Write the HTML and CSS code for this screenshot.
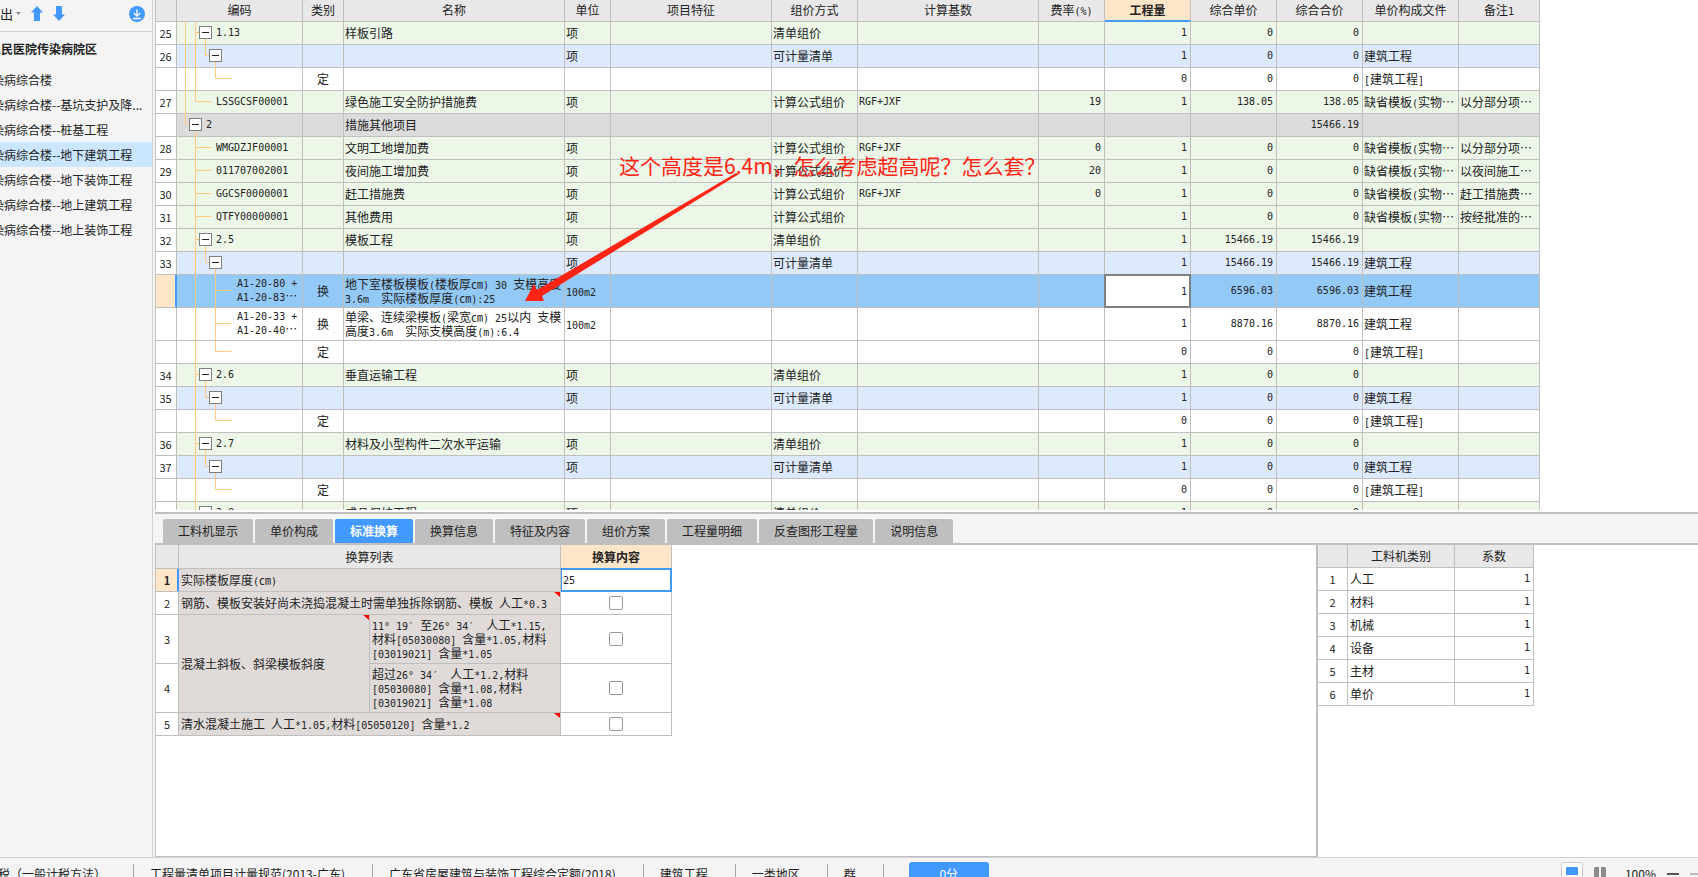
FILE: index.html
```html
<!DOCTYPE html>
<html lang="zh-CN">
<head>
<meta charset="utf-8">
<title>地下建筑工程 - 措施项目</title>
<link rel="stylesheet" href="styles.css">
</head>
<body>
<!-- Tree connector shapes, one group per kind of row -->
<svg class="defs" aria-hidden="true">
  <defs>
    <g id="box"><rect x="0.5" y="0.5" width="12" height="12" fill="#fff" stroke="#808080"/><path d="M3 6.5h7" stroke="#222"/></g>
    <g id="t-group-a"><path d="M8.5 0v23M18.5 0v23M18 10.5h4M28.5 17v6"/><use href="#box" x="22" y="4"/></g>
    <g id="t-sub-a"><path d="M8.5 0v23M18.5 0v23M28.5 0v10.5h4M38.5 17v6"/><use href="#box" x="32" y="4"/></g>
    <g id="t-end-a"><path d="M8.5 0v23M18.5 0v23M38.5 0v10.5h16"/></g>
    <g id="t-last-a"><path d="M8.5 0v23M18.5 0v10.5h16"/></g>
    <g id="t-root"><path d="M8.5 0v10.5h4M18.5 17v6"/><use href="#box" x="12" y="4"/></g>
    <g id="t-leaf"><path d="M18.5 0v23M18 10.5h16"/></g>
    <g id="t-group"><path d="M18.5 0v23M18 10.5h4M28.5 17v6"/><use href="#box" x="22" y="4"/></g>
    <g id="t-sub"><path d="M18.5 0v23M28.5 0v10.5h4M38.5 17v6"/><use href="#box" x="32" y="4"/></g>
    <g id="t-item"><path d="M18.5 0v33M38.5 0v33M38 15.5h16"/></g>
    <g id="t-end"><path d="M18.5 0v23M38.5 0v10.5h16"/></g>
  </defs>
</svg>

<div class="app">
  <div class="workspace">
    <aside class="sidebar">
      <div class="toolbar">
        <button class="export" type="button">导出<svg width="5" height="3"><path d="M0 0h5L2.500 3z" fill="#8c8c8c"/></svg></button>
        <button class="tool" type="button" aria-label="上移"><svg width="12" height="15"><path d="M6 0l6 6.500H9V15H3V6.500H0z" fill="#4299ff"/></svg></button>
        <button class="tool" type="button" aria-label="下移"><svg width="12" height="15"><path d="M6 15l6-6.500H9V0H3v8.500H0z" fill="#4299ff"/></svg></button>
        <button class="tool download" type="button" aria-label="下载"><svg width="16" height="16"><circle cx="8" cy="8" r="8" fill="#4299ff"/><path d="M8 3.500v6M4.800 7L8 10.200 11.200 7M4 12.500h8" fill="none" stroke="#fff" stroke-width="1.300"/></svg></button>
      </div>
      <h1 class="project">人民医院传染病院区</h1>
      <nav class="units">
        <a href="#u1">染病综合楼</a>
        <a href="#u2">染病综合楼--基坑支护及降...</a>
        <a href="#u3">染病综合楼--桩基工程</a>
        <a href="#u4" class="current">染病综合楼--地下建筑工程</a>
        <a href="#u5">染病综合楼--地下装饰工程</a>
        <a href="#u6">染病综合楼--地上建筑工程</a>
        <a href="#u7">染病综合楼--地上装饰工程</a>
      </nav>
    </aside>

    <main class="main">
      <section class="upper">
        <div class="grid-view">
          <table class="sheet bill">
            <colgroup><col class="c-no"><col class="c-code"><col class="c-kind"><col class="c-name"><col class="c-unit"><col class="c-feature"><col class="c-mode"><col class="c-base"><col class="c-rate"><col class="c-num"><col class="c-num"><col class="c-num"><col class="c-file"><col class="c-note"></colgroup>
            <thead>
              <tr><th><th>编码<th>类别<th>名称<th>单位<th>项目特征<th>组价方式<th>计算基数<th>费率<span class="m">(%)</span><th class="picked">工程量<th>综合单价<th>综合合价<th>单价构成文件<th>备注<span class="m">1</span></tr>
            </thead>
            <tbody>
              <tr class="green"><td>25<td><div class="tree"><svg class="l3"><use href="#t-group-a"/></svg>1.13</div><td><td>样板引路<td>项<td><td>清单组价<td><td><td>1<td>0<td>0<td><td></tr>
              <tr class="blue"><td>26<td><div class="tree"><svg class="l3"><use href="#t-sub-a"/></svg></div><td><td><td>项<td><td>可计量清单<td><td><td>1<td>0<td>0<td>建筑工程<td></tr>
              <tr><td><td><div class="tree"><svg class="l3"><use href="#t-end-a"/></svg></div><td>定<td><td><td><td><td><td><td>0<td>0<td>0<td><span class="m">[</span>建筑工程<span class="m">]</span><td></tr>
              <tr class="green"><td>27<td><div class="tree"><svg class="l3"><use href="#t-last-a"/></svg>LSSGCSF00001</div><td><td>绿色施工安全防护措施费<td>项<td><td>计算公式组价<td>RGF+JXF<td>19<td>1<td>138.05<td>138.05<td>缺省模板<span class="m">(</span>实物…<td>以分部分项…</tr>
              <tr class="grey"><td><td><div class="tree"><svg class="l2"><use href="#t-root"/></svg>2</div><td><td>措施其他项目<td><td><td><td><td><td><td><td>15466.19<td><td></tr>
              <tr class="green"><td>28<td><div class="tree"><svg class="l3"><use href="#t-leaf"/></svg>WMGDZJF00001</div><td><td>文明工地增加费<td>项<td><td>计算公式组价<td>RGF+JXF<td>0<td>1<td>0<td>0<td>缺省模板<span class="m">(</span>实物…<td>以分部分项…</tr>
              <tr class="green"><td>29<td><div class="tree"><svg class="l3"><use href="#t-leaf"/></svg>011707002001</div><td><td>夜间施工增加费<td>项<td><td>计算公式组价<td><td>20<td>1<td>0<td>0<td>缺省模板<span class="m">(</span>实物…<td>以夜间施工…</tr>
              <tr class="green"><td>30<td><div class="tree"><svg class="l3"><use href="#t-leaf"/></svg>GGCSF0000001</div><td><td>赶工措施费<td>项<td><td>计算公式组价<td>RGF+JXF<td>0<td>1<td>0<td>0<td>缺省模板<span class="m">(</span>实物…<td>赶工措施费…</tr>
              <tr class="green"><td>31<td><div class="tree"><svg class="l3"><use href="#t-leaf"/></svg>QTFY00000001</div><td><td>其他费用<td>项<td><td>计算公式组价<td><td><td>1<td>0<td>0<td>缺省模板<span class="m">(</span>实物…<td>按经批准的…</tr>
              <tr class="green"><td>32<td><div class="tree"><svg class="l3"><use href="#t-group"/></svg>2.5</div><td><td>模板工程<td>项<td><td>清单组价<td><td><td>1<td>15466.19<td>15466.19<td><td></tr>
              <tr class="blue"><td>33<td><div class="tree"><svg class="l3"><use href="#t-sub"/></svg></div><td><td><td>项<td><td>可计量清单<td><td><td>1<td>15466.19<td>15466.19<td>建筑工程<td></tr>
              <tr class="tall selected"><td><td><div class="tree"><svg class="l4"><use href="#t-item"/></svg><span>A1-20-80 +<br>A1-20-83<span class="c">…</span></span></div><td>换<td>地下室楼板模板<span class="m">(</span>楼板厚㎝<span class="m">) 30 </span>支模高度<br><span class="m">3.6m&nbsp; </span>实际楼板厚度<span class="m">(</span>㎝<span class="m">):25</span><td><span class="m">100m2</span><td><td><td><td><td class="edit"><input type="text" value="1" aria-label="工程量"><td>6596.03<td>6596.03<td>建筑工程<td></tr>
              <tr class="tall"><td><td><div class="tree"><svg class="l4"><use href="#t-item"/></svg><span>A1-20-33 +<br>A1-20-40<span class="c">…</span></span></div><td>换<td>单梁、连续梁模板<span class="m">(</span>梁宽㎝<span class="m">) 25</span>以内<span class="m"> </span>支模<br>高度<span class="m">3.6m&nbsp; </span>实际支模高度<span class="m">(m):6.4</span><td><span class="m">100m2</span><td><td><td><td><td>1<td>8870.16<td>8870.16<td>建筑工程<td></tr>
              <tr><td><td><div class="tree"><svg class="l3"><use href="#t-end"/></svg></div><td>定<td><td><td><td><td><td><td>0<td>0<td>0<td><span class="m">[</span>建筑工程<span class="m">]</span><td></tr>
              <tr class="green"><td>34<td><div class="tree"><svg class="l3"><use href="#t-group"/></svg>2.6</div><td><td>垂直运输工程<td>项<td><td>清单组价<td><td><td>1<td>0<td>0<td><td></tr>
              <tr class="blue"><td>35<td><div class="tree"><svg class="l3"><use href="#t-sub"/></svg></div><td><td><td>项<td><td>可计量清单<td><td><td>1<td>0<td>0<td>建筑工程<td></tr>
              <tr><td><td><div class="tree"><svg class="l3"><use href="#t-end"/></svg></div><td>定<td><td><td><td><td><td><td>0<td>0<td>0<td><span class="m">[</span>建筑工程<span class="m">]</span><td></tr>
              <tr class="green"><td>36<td><div class="tree"><svg class="l3"><use href="#t-group"/></svg>2.7</div><td><td>材料及小型构件二次水平运输<td>项<td><td>清单组价<td><td><td>1<td>0<td>0<td><td></tr>
              <tr class="blue"><td>37<td><div class="tree"><svg class="l3"><use href="#t-sub"/></svg></div><td><td><td>项<td><td>可计量清单<td><td><td>1<td>0<td>0<td>建筑工程<td></tr>
              <tr><td><td><div class="tree"><svg class="l3"><use href="#t-end"/></svg></div><td>定<td><td><td><td><td><td><td>0<td>0<td>0<td><span class="m">[</span>建筑工程<span class="m">]</span><td></tr>
              <tr class="green"><td>38<td><div class="tree"><svg class="l3"><use href="#t-group"/></svg>2.8</div><td><td>成品保护工程<td>项<td><td>清单组价<td><td><td>1<td>0<td>0<td><td></tr>
            </tbody>
          </table>
          <p class="remark">这个高度是6.4m，怎么考虑超高呢？怎么套？</p>
          <svg class="arrow" width="216" height="132" aria-hidden="true"><path d="M0 129L9 112 12 118 211 1 214 2 17 124 19 129z" fill="#ff2414"/></svg>
        </div>
      </section>

      <section class="lower">
        <div class="tabs">
          <button type="button">工料机显示</button>
          <button type="button">单价构成</button>
          <button type="button" class="active">标准换算</button>
          <button type="button">换算信息</button>
          <button type="button">特征及内容</button>
          <button type="button">组价方案</button>
          <button type="button">工程量明细</button>
          <button type="button">反查图形工程量</button>
          <button type="button">说明信息</button>
        </div>
        <div class="panes">
          <div class="pane-left">
            <table class="sheet convert">
              <colgroup><col class="v-no"><col class="v-text"><col class="v-text"><col class="v-value"></colgroup>
              <thead>
                <tr><th><th colspan="2">换算列表<th class="picked">换算内容</tr>
              </thead>
              <tbody>
                <tr><td class="no current">1<td class="rule" colspan="2"><label for="thick">实际楼板厚度<span class="m">(</span>㎝<span class="m">)</span></label><td class="edit"><input id="thick" type="text" value="25"></tr>
                <tr><td class="no">2<td class="rule flag" colspan="2"><label for="r2">钢筋、模板安装好尚未浇捣混凝土时需单独拆除钢筋、模板<span class="m"> </span>人工<span class="m">*0.3</span></label><td class="tick"><input id="r2" type="checkbox"></tr>
                <tr class="three"><td class="no">3<td class="rule flag" rowspan="2">混凝土斜板、斜梁模板斜度<td class="rule"><label for="r3"><span class="m">11° 19′ </span>至<span class="m">26° 34′&nbsp; </span>人工<span class="m">*1.15,</span><br>材料<span class="m">[05030080] </span>含量<span class="m">*1.05,</span>材料<br><span class="m">[03019021] </span>含量<span class="m">*1.05</span></label><td class="tick"><input id="r3" type="checkbox"></tr>
                <tr class="three"><td class="no">4<td class="rule"><label for="r4">超过<span class="m">26° 34′&nbsp; </span>人工<span class="m">*1.2,</span>材料<br><span class="m">[05030080] </span>含量<span class="m">*1.08,</span>材料<br><span class="m">[03019021] </span>含量<span class="m">*1.08</span></label><td class="tick"><input id="r4" type="checkbox"></tr>
                <tr><td class="no">5<td class="rule flag" colspan="2"><label for="r5">清水混凝土施工<span class="m"> </span>人工<span class="m">*1.05,</span>材料<span class="m">[05050120] </span>含量<span class="m">*1.2</span></label><td class="tick"><input id="r5" type="checkbox"></tr>
              </tbody>
            </table>
          </div>
          <div class="pane-right">
            <table class="sheet factor">
              <colgroup><col class="f-no"><col class="f-kind"><col class="f-value"></colgroup>
              <thead><tr><th><th>工料机类别<th>系数</tr></thead>
              <tbody>
                <tr><td class="no">1<td>人工<td class="num">1</tr>
                <tr><td class="no">2<td>材料<td class="num">1</tr>
                <tr><td class="no">3<td>机械<td class="num">1</tr>
                <tr><td class="no">4<td>设备<td class="num">1</tr>
                <tr><td class="no">5<td>主材<td class="num">1</tr>
                <tr><td class="no">6<td>单价<td class="num">1</tr>
              </tbody>
            </table>
          </div>
        </div>
      </section>
    </main>
  </div>

  <footer class="status">
    <span class="first">税（一般计税方法）</span>
    <span>工程量清单项目计量规范(2013-广东)</span>
    <span>广东省房屋建筑与装饰工程综合定额(2018)</span>
    <span>建筑工程</span>
    <span>一类地区</span>
    <span>群</span>
    <span class="score-cell"><button class="score" type="button">0分</button></span>
    <div class="zoom">
      <button class="view on" type="button" aria-label="上下布局"><svg width="12" height="16"><path d="M1 0h10a1 1 0 0 1 1 1v7H0V1a1 1 0 0 1 1-1zM0 10h12v6H0z" fill="#4299ff"/></svg></button>
      <button class="view" type="button" aria-label="左右布局"><svg width="12" height="16"><path d="M1 0h4v16H0V1zM7 0h4l1 1v15H7z" fill="#8c8c8c"/></svg></button>
      <span class="percent">100%</span>
      <button class="minus-btn" type="button" aria-label="缩小"></button>
      <i class="track"></i>
    </div>
  </footer>
</div>
</body>
</html>
```

FILE: styles.css
```css
* { box-sizing: border-box; }

body {
  margin: 0;
  background: #fff;
  color: #222;
  font: 12px/14px "Noto Sans CJK SC", sans-serif;
  overflow: hidden;
}

button, input { font: inherit; color: inherit; margin: 0; }
button { border: 0; padding: 0; background: none; }
svg { display: block; flex: none; }

.defs { position: absolute; width: 0; height: 0; }
.m { font-family: "DejaVu Sans Mono", "Noto Sans CJK SC", monospace; font-size: 10px; line-height: 0; }
.c { font-family: "Noto Sans CJK SC", sans-serif; font-size: 12px; line-height: 0; }

.app { display: flex; flex-direction: column; height: 100vh; }
.workspace { display: flex; flex: 1; min-height: 0; background: #f4f4f4; }

/* Sidebar */
.sidebar { flex: none; width: 153px; margin-right: 2px; border-right: 1px solid #d2d2d2; overflow: hidden; white-space: nowrap; }
.toolbar { display: flex; align-items: center; height: 32px; padding-bottom: 4px; border-bottom: 1px solid #d2d2d2; }
.export { display: flex; align-items: center; gap: 3px; margin-left: -13px; font-size: 13px; }
.tool { margin-left: 10px; }
.download { margin: 0 7px 0 auto; }
.project { margin: 0; padding: 7px 0 8px; font-size: 12px; line-height: 20px; text-indent: -11px; }
.units a { display: block; line-height: 25px; text-indent: -8px; color: inherit; text-decoration: none; }
.units .current { background: #cbe7ff; }

/* Main split */
.main { display: flex; flex-direction: column; flex: 1; min-width: 0; }
.upper { flex: 510 1 0; min-height: 0; display: flex; padding-bottom: 2px; border-bottom: 2px solid #bfbfbf; background: #fff; }
.grid-view { position: relative; flex: 1; min-width: 0; overflow: hidden; }
.lower { flex: 343 1 0; min-height: 0; display: flex; flex-direction: column; }

/* Tables */
.sheet { table-layout: fixed; border-collapse: separate; border-spacing: 0; width: 0; }
.sheet tr { height: 23px; }
.sheet th, .sheet td { height: 23px; padding: 0 2px; border: solid #bfbfbf; border-width: 0 1px 1px 0; white-space: nowrap; overflow: hidden; text-align: left; }
.sheet th { background: #e8e8e8; font-weight: normal; text-align: center; }
.sheet th.picked { background: #ffe6c8; font-weight: bold; }
.sheet td.no, .bill td:first-child { background: #fff; text-align: center; font-size: 11px; }
.sheet .edit { padding: 0; overflow: visible; }
.edit input { display: block; width: 100%; border: 0; border-radius: 0; padding: 0 3px 0 2px; background: #fff; outline: 2px solid #4299ff; outline-offset: -1px; font: 10px/14px "DejaVu Sans Mono", monospace; }

.bill tr > :first-child { border-left: 1px solid #bfbfbf; }
.bill td { padding-left: 1px; }
.bill thead tr, .bill th { height: 22px; }
.bill th { padding-bottom: 1px; }
.bill th.picked { border-bottom-color: #4299ff; box-shadow: inset 0 -1px #4299ff; }
.c-no { width: 22px; }
.c-code { width: 126px; }
.c-kind { width: 41px; }
.c-name { width: 221px; }
.c-unit { width: 46px; }
.c-feature { width: 161px; }
.c-mode, .c-num { width: 86px; }
.c-base { width: 181px; }
.c-rate { width: 66px; }
.c-file { width: 96px; }
.c-note { width: 81px; }

.sheet.bill td { padding-left: 1px; }
.sheet.bill td:nth-child(3) { padding: 0; text-align: center; }
.bill td:nth-child(2), .bill td:nth-child(8), .bill td:nth-child(9), .bill td:nth-child(10), .bill td:nth-child(11), .bill td:nth-child(12), .factor .num {
  font-family: "DejaVu Sans Mono", "Noto Sans CJK SC", monospace;
  font-size: 10px;
}
.sheet.bill td:nth-child(9), .sheet.bill td:nth-child(10), .sheet.bill td:nth-child(11), .sheet.bill td:nth-child(12), .sheet.factor .num { padding-right: 3px; text-align: right; }
.sheet.bill td:nth-child(2), .sheet.bill td.edit { padding: 0; overflow: visible; }

.green { background: #ecf7e8; }
.blue { background: #ddeafe; }
.grey { background: #dcdcdc; }
.bill .selected { background: #92c9f7; }
.sheet .tall, .sheet .tall td { height: 33px; }
.bill .selected td:first-child { background: #ffe6c8; border-right-color: #4299ff; box-shadow: inset -1px 0 #4299ff; }
.bill .edit input { height: 32px; text-align: right; outline-color: #808080; }

.tree { display: flex; align-items: center; height: 22px; }
.tall .tree { height: 32px; }
.tree svg { align-self: flex-start; height: 22px; overflow: visible; fill: none; stroke: #ffca80; }
.tree .l2 { width: 29px; }
.tree .l3 { width: 39px; }
.tree .l4 { width: 60px; }

/* Note drawn over the grid */
.remark { position: absolute; left: 464px; top: 150px; margin: 0; color: #ff2414; font-size: 21px; line-height: 30px; white-space: nowrap; }
.arrow { position: absolute; left: 370px; top: 172px; }

/* Tabs */
.tabs { display: flex; align-items: flex-end; gap: 2px; height: 31px; flex: none; padding: 0 8px; border-bottom: 2px solid #bfbfbf; }
.tabs button { height: 24px; padding: 0 15px; border-radius: 2px 2px 0 0; background: #bfbfbf; white-space: nowrap; }
.tabs .active { background: #4299ff; color: #fff; font-weight: bold; }

.panes { display: flex; flex: 1; min-height: 0; background: #fff; }
.pane-left { flex: 1160 1 0; min-width: 0; border: solid #bfbfbf; border-width: 0 0 1px 1px; overflow: hidden; }
.pane-right { flex: 380 1 0; min-width: 0; border-left: 2px solid #bfbfbf; overflow: hidden; }

.v-no { width: 23px; }
.v-text { width: 191px; }
.v-value { width: 111px; }
.convert thead tr, .convert th { height: 24px; }
.convert .rule { position: relative; background: #e0dbd9; }
.convert .three td { height: 49px; }
.convert .no.current { background: #ffe6c8; font-weight: bold; box-shadow: inset -1px 0 #4299ff; border-right-color: #4299ff; }
.convert .edit input { height: 22px; }
.flag::after { content: ""; position: absolute; top: 0; right: 0; width: 6px; height: 5px; background: #f00; clip-path: polygon(0 0, 100% 0, 100% 100%); }
.convert .tick { text-align: center; }
.tick input { appearance: none; display: block; width: 14px; height: 14px; margin: 0 auto; border: 1px solid #999; border-radius: 2px; background: #fff; }

.f-no { width: 30px; }
.f-kind { width: 107px; }
.f-value { width: 79px; }

/* Status bar */
.status { display: flex; flex: none; height: 20px; border-top: 1px solid #d2d2d2; background: #f4f4f4; overflow: hidden; white-space: nowrap; }
.status > span { margin-top: 6px; padding: 2px 27px 0 16px; border-left: 1px solid #a0a8b0; line-height: 16px; }
.status > .first { border-left: 0; padding: 2px 27px 0 0; text-indent: -2px; }
.status > .score-cell { margin-top: 4px; padding: 0 0 0 26px; border-left: 0; position: relative; }
.score-cell::before { content: ""; position: absolute; left: 0; top: 2px; width: 1px; height: 16px; background: #a0a8b0; }
.score { width: 80px; height: 24px; border-radius: 3px; background: #4299ff; color: #fff; }
.zoom { display: flex; align-items: flex-start; gap: 11px; margin: 4px 0 0 auto; }
.view { width: 12px; padding-top: 5px; }
.view.on { width: 22px; height: 24px; padding: 4px; border: 1px solid #ccc; border-radius: 3px; background: #fff; }
.percent { padding: 4px 0 0 8px; line-height: 16px; }
.minus-btn { width: 12px; height: 2px; margin-top: 11px; background: #555; }
.track { width: 8px; height: 2px; margin-top: 11px; background: #bbb; }
```
